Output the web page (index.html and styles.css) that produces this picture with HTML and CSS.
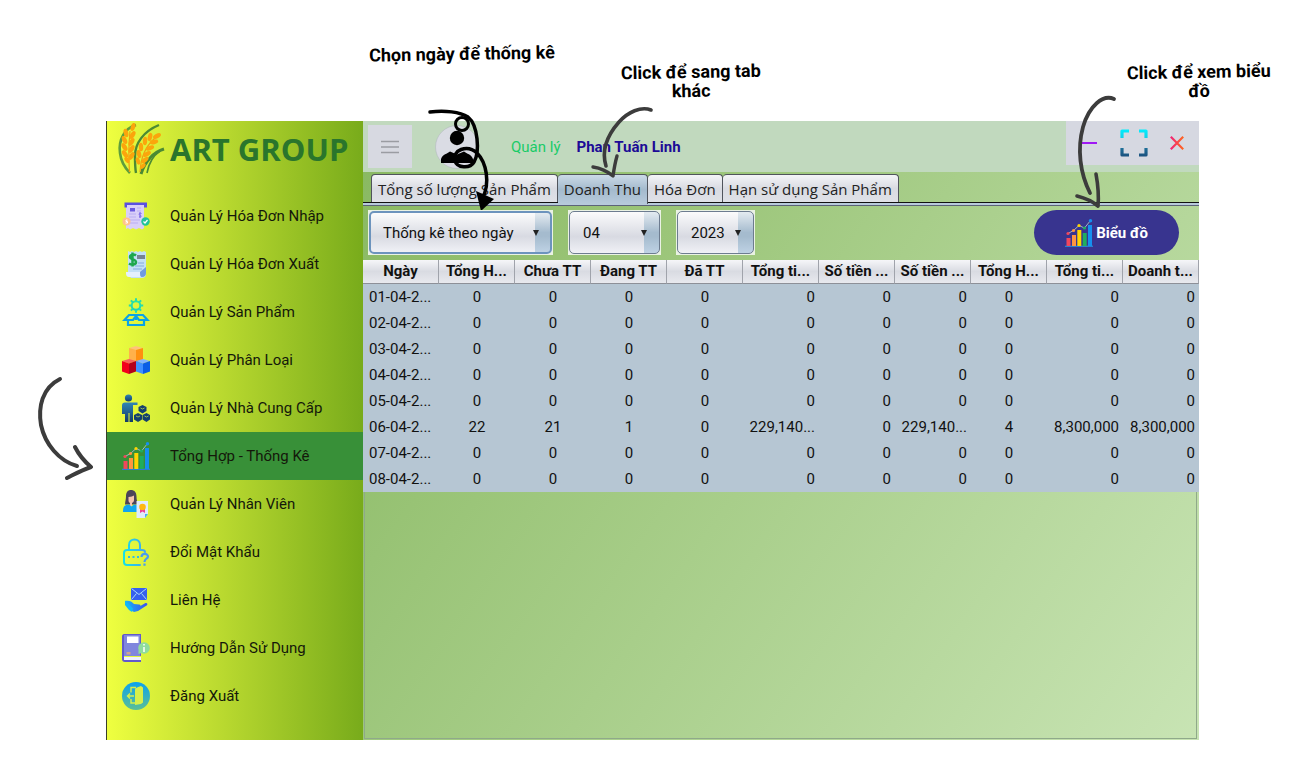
FILE: index.html
```html
<!DOCTYPE html>
<html lang="vi">
<head>
<meta charset="utf-8">
<title>ART GROUP - Tổng Hợp - Thống Kê</title>
<link rel="stylesheet" href="styles.css">
</head>
<body>
<svg class="defs" aria-hidden="true">
  <defs>
    <linearGradient id="g-teal" x1="0" y1="0" x2="0" y2="1"><stop offset="0" stop-color="#2be8a0"/><stop offset="1" stop-color="#1fd0b8"/></linearGradient>
    <linearGradient id="g-navy" x1="0" y1="0" x2="0" y2="1"><stop offset="0" stop-color="#2f86b5"/><stop offset="1" stop-color="#143a66"/></linearGradient>
    <linearGradient id="g-cyan" gradientUnits="userSpaceOnUse" x1="0" y1="0" x2="26" y2="0"><stop offset="0" stop-color="#12e6e6"/><stop offset="1" stop-color="#4a9cf0"/></linearGradient>
    <linearGradient id="g-mail" x1="0" y1="0" x2="1" y2="0"><stop offset="0" stop-color="#18b4f6"/><stop offset="1" stop-color="#3a50ee"/></linearGradient>
    <linearGradient id="g-exit" x1="0" y1="0" x2="0" y2="1"><stop offset="0" stop-color="#0aa2ee"/><stop offset="1" stop-color="#5cbf94"/></linearGradient>
    <linearGradient id="g-max" gradientUnits="userSpaceOnUse" x1="0" y1="0" x2="0" y2="28"><stop offset="0" stop-color="#00f0ff"/><stop offset=".3" stop-color="#12d4ea"/><stop offset=".7" stop-color="#1f6d97"/><stop offset="1" stop-color="#1b4f7c"/></linearGradient>
    <linearGradient id="g-close" gradientUnits="userSpaceOnUse" x1="0" y1="0" x2="14" y2="0"><stop offset="0" stop-color="#f0207c"/><stop offset="1" stop-color="#ff6a1a"/></linearGradient>
    <symbol id="chart" viewBox="0 0 28 28">
      <path d="M0 27.3h28" stroke="#2a7fd0" stroke-width="1.4"/>
      <path d="M1.5 19h4v8h-4z" fill="#f2475c"/><path d="M7 16h4v11H7z" fill="#ff9440"/><path d="M12.3 11h4v16h-4z" fill="#ffd500"/><path d="M17.7 14h4v13h-4z" fill="#1fae5e"/><path d="M23 6h4v21h-4z" fill="#1590f0"/>
      <path d="M3 14.5 8.5 11.500 14 6.500l5.500 2.500L25.500 1.500" fill="none" stroke="#9fb4c4" stroke-width="1"/>
      <circle cx="3" cy="14.500" r="1.600" fill="#f2475c"/><circle cx="8.500" cy="11.500" r="1.600" fill="#ff9440"/><circle cx="14" cy="6.500" r="1.600" fill="#ffd500"/><circle cx="19.500" cy="9" r="1.600" fill="#1fae5e"/><circle cx="25.500" cy="1.800" r="1.700" fill="#1590f0"/>
    </symbol>
  </defs>
</svg>

<main class="page">
  <div class="app">
    <aside class="sidebar">
      <div class="brand">
        <svg class="brand-logo" viewBox="0 0 48 52" aria-hidden="true">
          <g fill="none" stroke="#4c8a34">
            <path d="M19 2C8 5 1 17 3 30c1 9 5 15 10 20" stroke-width="2.600" stroke="#5f9e3c"/>
            <path d="M42 2C27 8 18 20 18 33c0 7 0 12 1 17" stroke-width="2.400"/>
            <path d="M47 26c-10 3-19 12-23 25" stroke-width="3"/>
            <path d="M43 28c-6 4-11 11-13 22" stroke-width="1.600"/>
          </g>
          <g stroke="#f0a010" stroke-width="1.200" fill="none"><path d="M13 8c-1 10-2 20-.5 41M38 15C28 24 24 34 23 49"/></g>
          <g fill="#fba50c">
            <ellipse cx="16" cy="4" rx="2.200" ry="4.200" transform="rotate(18 16 4)"/>
            <ellipse cx="9" cy="10" rx="2.300" ry="4.300" transform="rotate(-14 9 10)"/><ellipse cx="15.500" cy="12" rx="2.300" ry="4.300" transform="rotate(32 15.500 12)"/>
            <ellipse cx="7.500" cy="17" rx="2.300" ry="4.300" transform="rotate(-24 7.500 17)"/><ellipse cx="14.500" cy="19" rx="2.300" ry="4.300" transform="rotate(32 14.500 19)"/>
            <ellipse cx="7.500" cy="24" rx="2.300" ry="4.300" transform="rotate(-30 7.500 24)"/><ellipse cx="14.500" cy="26" rx="2.300" ry="4.300" transform="rotate(32 14.500 26)"/>
            <ellipse cx="8" cy="31" rx="2.300" ry="4.300" transform="rotate(-34 8 31)"/><ellipse cx="14.500" cy="33" rx="2.300" ry="4.300" transform="rotate(32 14.500 33)"/>
            <ellipse cx="10" cy="37" rx="2" ry="3.500" transform="rotate(-36 10 37)"/>
            <ellipse cx="40" cy="13" rx="2.200" ry="4.300" transform="rotate(62 40 13)"/>
            <ellipse cx="33" cy="14" rx="2.200" ry="4.200" transform="rotate(14 33 14)"/><ellipse cx="37" cy="19" rx="2.200" ry="4.300" transform="rotate(76 37 19)"/>
            <ellipse cx="28" cy="18" rx="2.200" ry="4.200" transform="rotate(4 28 18)"/><ellipse cx="33" cy="25" rx="2.200" ry="4.300" transform="rotate(70 33 25)"/>
            <ellipse cx="24" cy="24" rx="2.200" ry="4.200" transform="rotate(-4 24 24)"/><ellipse cx="30" cy="31" rx="2.200" ry="4.300" transform="rotate(60 30 31)"/>
            <ellipse cx="22" cy="31" rx="2.200" ry="4.200" transform="rotate(-14 22 31)"/><ellipse cx="28" cy="37" rx="2.200" ry="4.200" transform="rotate(50 28 37)"/>
            <ellipse cx="21" cy="38" rx="2" ry="3.800" transform="rotate(-20 21 38)"/><ellipse cx="26" cy="43" rx="1.800" ry="3.400" transform="rotate(40 26 43)"/>
          </g>
        </svg>
        <h1 class="brand-name">ART GROUP</h1>
      </div>
      <nav class="menu">
        <a class="menu-item" href="#nhap">
          <svg class="menu-icon" viewBox="0 0 28 28" aria-hidden="true"><path d="M4 3h18v23l-2 1.500-3-1.500-3 1.500-3-1.500-3 1.500-2-1.500-2 1z" fill="#d9cff8"/><path d="M2.500.500h22.500v5H22V3H5v2.500H2.500z" fill="#5a50e0"/><path d="M8 6h5v3.500H8z" fill="#6a5ae0"/><path d="M15 6h4M15 9h4M7 12h7M7 15h7M7 18h11M7 21h9" stroke="#b9aef2" stroke-width="1.200"/><path d="M19.500 11.500c-3-1-3 1.500-1.500 1.700 2 .3 1.500 2.500-1 1.500M18 10v6" stroke="#7a68e8" fill="none"/><circle cx="4.500" cy="19.500" r="4" fill="#ffc28a"/><path d="M5.500 18H4v1.500h1.500V21h-2" stroke="#fff" fill="none"/><circle cx="23.500" cy="19.500" r="4.200" fill="#22c39a"/><path d="m21.500 19.500 1.500 1.500 2.500-3" stroke="#fff" stroke-width="1.200" fill="none"/></svg>
          <span>Quản Lý Hóa Đơn Nhập</span></a>
        <a class="menu-item" href="#xuat">
          <svg class="menu-icon" viewBox="0 0 28 28" aria-hidden="true"><path d="M6 1l2 1 2-1 2 1 2-1 2 1 2-1 2 1 2-1 2 1v22c0 3-2 4-4 4H9l-3-4z" fill="#c3e0f6"/><path d="M4 22h14c0 3 1 5 3 5H7c-3 0-3-3-3-5z" fill="#e4f0fc"/><path d="M20 27c3 0 4-2 4-4v-6l-6 5c0 3 0 5 2 5z" fill="#6f9be0"/><path d="M16 5v4M18 5v4M20 5v4M22 5v4" stroke="#445" stroke-width="1.200"/><path d="M16 13h6M13 16h9M11 19h9" stroke="#9bbce8" stroke-width="1.300"/><path d="M14 5.500c-2-1.500-6-1.200-6 1.500s6 2 6 5-4.500 3.200-7 1.500M10.500 2.500v14" fill="none" stroke="#1da74d" stroke-width="2.500"/></svg>
          <span>Quản Lý Hóa Đơn Xuất</span></a>
        <a class="menu-item" href="#sanpham">
          <svg class="menu-icon" viewBox="0 0 28 28" aria-hidden="true"><g fill="none" stroke="url(#g-teal)"><circle cx="14" cy="7.500" r="4.300" stroke-width="2"/></g><path d="M14 .300v3M14 11.700v3M6.800 7.500h3M18.200 7.500h3M8.900 2.400l2.100 2.100M17 10.500l2.100 2.100M19.100 2.400 17 4.500M8.900 12.600l2.100-2.100" fill="none" stroke="#24dcae" stroke-width="2"/><path d="M7 17h14l4.500 5H17l-3-4-3 4H2.500zM6 22v5h16v-5M14 18v4" fill="none" stroke="#0ba3e6" stroke-width="2.200"/></svg>
          <span>Quản Lý Sản Phẩm</span></a>
        <a class="menu-item" href="#phanloai">
          <svg class="menu-icon" viewBox="0 0 28 28" aria-hidden="true"><path d="m14 0 7 2-7 2-7-2z" fill="#ffc27a"/><path d="M7 2l7 2v13l-7-2z" fill="#ffb04a"/><path d="m14 4 7-2v13l-7 2z" fill="#ff8f0f"/><path d="m7 13 7 2-7 2.500L0 15z" fill="#f8625e"/><path d="M0 15l7 2.500V28l-7-2.500z" fill="#f2001c"/><path d="M7 17.500 14 15v10.500L7 28z" fill="#b4001c"/><path d="m21 13 7 2-7 2.500-7-2.500z" fill="#82b4ff"/><path d="M14 15l7 2.500V28l-7-2.500z" fill="#4090ff"/><path d="m21 17.500 7-2.500v10.500L21 28z" fill="#0a5ee6"/></svg>
          <span>Quản Lý Phân Loại</span></a>
        <a class="menu-item" href="#nhacungcap">
          <svg class="menu-icon" viewBox="0 0 28 28" aria-hidden="true"><g fill="url(#g-navy)"><circle cx="6.500" cy="4" r="3.600"/><path d="M3 8.500h12.500v2.600H11V28H7.500V19h-1v9H3v-8H0v-8.500c0-2 1-3 3-3z"/></g><g fill="#143f6e"><path d="m20.500 11 4 2v4l-4 2.500-4-2.500v-4z"/><path d="m16 19 4 2v4.500L16 28l-4-2.500V21z"/><path d="m24.500 19 3.500 2v4.500L24.500 28 20.500 25.500V21z"/></g><path d="m18.500 14 2 1 2-1M14 22l2 1 2-1M22.500 22l2 1 2-1" fill="none" stroke="#b9d850" stroke-width=".8"/></svg>
          <span>Quản Lý Nhà Cung Cấp</span></a>
        <a class="menu-item menu-item-active" href="#thongke" aria-current="page">
          <svg class="menu-icon" aria-hidden="true"><use href="#chart"/></svg>
          <span>Tổng Hợp - Thống Kê</span></a>
        <a class="menu-item" href="#nhanvien">
          <svg class="menu-icon" viewBox="0 0 28 28" aria-hidden="true"><path d="M3 14.500c0-3 1-5 1-8C4 2 6 0 9 0s5.500 2 5.500 6.500c0 2.500.5 5 1.500 8z" fill="#4d4458"/><path d="M6.500 7c3 0 4-1 5.500-1.500V10c0 1.500-1 2.500-2 3v3H8v-3c-1-.5-1.500-1.500-1.500-3z" fill="#f6c4ae"/><path d="M1 22c0-5 1-7 6-7.500l2.500 2 2.500-2c5 .5 5 3 5 7.500z" fill="#10a5ee"/><path d="M14.500 11h11.500v13l-3 4h-8.500z" fill="#e0ecfb"/><path d="M26 24h-3v4z" fill="#46b0f0"/><path d="M18 18h5v5l-2.500-1.500L18 23z" fill="#ee3f9a"/><circle cx="20.500" cy="17" r="3.300" fill="#ffb80f"/></svg>
          <span>Quản Lý Nhân Viên</span></a>
        <a class="menu-item" href="#matkhau">
          <svg class="menu-icon" viewBox="0 0 28 28" aria-hidden="true"><g fill="none" stroke="url(#g-cyan)" stroke-width="2" stroke-linecap="round"><path d="M7 11V7c0-7.500 11-7.500 11 0v4"/><path d="M18 27H5c-2 0-3-1-3-3V15c0-2 1-3 3-3h15c2 0 3 1 3 2"/></g><path d="M6 18h2v2H6zM10.500 18h2v2h-2zM15 18h2v2h-2z" fill="#30bdec"/><path d="M19.500 19c0-4 6.500-4 6.500-.5 0 2.500-3.500 2-3.500 5.500M22.500 25.500v2.200" fill="none" stroke="#4a9cf0" stroke-width="2.200"/></svg>
          <span>Đổi Mật Khẩu</span></a>
        <a class="menu-item" href="#lienhe">
          <svg class="menu-icon" viewBox="0 0 28 28" aria-hidden="true"><path d="M9 2h16v12H9z" fill="#3560ee"/><path d="m9.500 2.500 7.500 6 7.500-6M9.500 13.500l5-6M24.500 13.500l-5-6" stroke="#a8d8f8" fill="none"/><path d="M3 15c3-1 7 0 9 3l5 .5c2 0 2 2 0 2.200h-4 4l6-3.500c2-1 3 1 2 2L16 25l-4 1-5-3-4-5z" fill="url(#g-mail)"/><path d="M3 14.500l8 8-1 3.500-3-2-4-5z" fill="#10b8f8"/></svg>
          <span>Liên Hệ</span></a>
        <a class="menu-item" href="#huongdan">
          <svg class="menu-icon" viewBox="0 0 28 28" aria-hidden="true"><path d="M2 0h17v22H2v2h17v4H3c-2 0-3-1-3-3V2C0 1 1 0 2 0z" fill="#6259cc"/><path d="M2 23h17v3H2z" fill="#eef0ff"/><path d="M2 1h16v21H2z" fill="#8086dd"/><path d="M5 2.500h11.500V9H5z" fill="#fff"/><path d="M4.500 18h4v2.500h-4z" fill="#d0a58e"/><circle cx="22" cy="14" r="5.800" fill="#8fdc9c"/><path d="M16.500 16v4l4.500-1.500z" fill="#8fdc9c"/><path d="M22 13v5M22 10v1.500" stroke="#fff" stroke-width="1.500"/></svg>
          <span>Hướng Dẫn Sử Dụng</span></a>
        <a class="menu-item" href="#dangxuat">
          <svg class="menu-icon" viewBox="0 0 28 28" aria-hidden="true"><circle cx="14" cy="14" r="14" fill="url(#g-exit)"/><path d="M13 7.500c0-1 1-1.500 2-2l4-1.500 2 1.500v15L19 22l-6 1z" fill="#d6f04a"/><path d="M14 5.500H9v5M9 17v4h4M12 14H5.500M8 11.500 5.500 14 8 16.500" fill="none" stroke="#d6f04a" stroke-width="1.400"/></svg>
          <span>Đăng Xuất</span></a>
      </nav>
    </aside>

    <section class="content">
      <header class="topbar">
        <button class="menu-toggle" type="button" aria-label="Menu"><svg width="18" height="14" viewBox="0 0 18 14" aria-hidden="true"><path d="M0 1.500h18M0 7h18M0 12.500h18" stroke="#9a9ca2" stroke-width="1.500"/></svg></button>
        <svg class="avatar" viewBox="0 0 44 44" aria-hidden="true"><circle cx="22" cy="22" r="21.500" fill="#dadce4" stroke="#b4bac0" stroke-width=".6"/><circle cx="22" cy="13" r="7.200"/><path d="M6 38v-4c2-5 6-5 9-7.500l7 3 7-3c3 2.500 7 2.500 9 7.500v4z"/></svg>
        <span class="role">Quản lý</span>
        <strong class="user">Phan Tuấn Linh</strong>
        <div class="window-buttons">
          <button type="button" aria-label="Thu nhỏ"><svg width="16" height="4" viewBox="0 0 16 4" aria-hidden="true"><path d="M0 2h16" stroke="#a018f4" stroke-width="2"/></svg></button>
          <button type="button" aria-label="Phóng to"><svg width="28" height="28" viewBox="0 0 28 28" aria-hidden="true"><path d="M2 9V2h7M19 2h7v7M26 19v7h-7M9 26H2v-7" fill="none" stroke="url(#g-max)" stroke-width="3.200" stroke-linejoin="round"/></svg></button>
          <button type="button" aria-label="Đóng"><svg width="14" height="14" viewBox="0 0 14 14" aria-hidden="true"><path d="m.8.8 12.400 12.400M13.200.8.8 13.200" stroke="url(#g-close)" stroke-width="2.200"/></svg></button>
        </div>
      </header>

      <div class="tabs" role="tablist">
        <button class="tab" type="button" role="tab">Tổng số lượng Sản Phẩm</button>
        <button class="tab tab-active" type="button" role="tab" aria-selected="true">Doanh Thu</button>
        <button class="tab" type="button" role="tab">Hóa Đơn</button>
        <button class="tab" type="button" role="tab">Hạn sử dụng Sản Phẩm</button>
      </div>

      <div class="filters">
        <span class="combo combo-mode"><select aria-label="Kiểu thống kê"><option>Thống kê theo ngày</option></select></span>
        <span class="combo combo-month"><select aria-label="Tháng"><option>04</option></select></span>
        <span class="combo combo-year"><select aria-label="Năm"><option>2023</option></select></span>
        <button class="chart-button" type="button"><svg width="28" height="28" aria-hidden="true"><use href="#chart"/></svg>Biểu đồ</button>
      </div>

      <table class="report">
        <thead><tr><th>Ngày</th><th>Tổng H...</th><th>Chưa TT</th><th>Đang TT</th><th>Đã TT</th><th>Tổng ti...</th><th>Số tiền ...</th><th>Số tiền ...</th><th>Tổng H...</th><th>Tổng ti...</th><th>Doanh t...</th></tr></thead>
        <tbody>
          <tr><td>01-04-2...</td><td>0</td><td>0</td><td>0</td><td>0</td><td class="money">0</td><td class="money">0</td><td class="money">0</td><td>0</td><td class="money">0</td><td class="money">0</td></tr>
          <tr><td>02-04-2...</td><td>0</td><td>0</td><td>0</td><td>0</td><td class="money">0</td><td class="money">0</td><td class="money">0</td><td>0</td><td class="money">0</td><td class="money">0</td></tr>
          <tr><td>03-04-2...</td><td>0</td><td>0</td><td>0</td><td>0</td><td class="money">0</td><td class="money">0</td><td class="money">0</td><td>0</td><td class="money">0</td><td class="money">0</td></tr>
          <tr><td>04-04-2...</td><td>0</td><td>0</td><td>0</td><td>0</td><td class="money">0</td><td class="money">0</td><td class="money">0</td><td>0</td><td class="money">0</td><td class="money">0</td></tr>
          <tr><td>05-04-2...</td><td>0</td><td>0</td><td>0</td><td>0</td><td class="money">0</td><td class="money">0</td><td class="money">0</td><td>0</td><td class="money">0</td><td class="money">0</td></tr>
          <tr><td>06-04-2...</td><td>22</td><td>21</td><td>1</td><td>0</td><td class="money">229,140...</td><td class="money">0</td><td class="money">229,140...</td><td>4</td><td class="money">8,300,000</td><td class="money">8,300,000</td></tr>
          <tr><td>07-04-2...</td><td>0</td><td>0</td><td>0</td><td>0</td><td class="money">0</td><td class="money">0</td><td class="money">0</td><td>0</td><td class="money">0</td><td class="money">0</td></tr>
          <tr><td>08-04-2...</td><td>0</td><td>0</td><td>0</td><td>0</td><td class="money">0</td><td class="money">0</td><td class="money">0</td><td>0</td><td class="money">0</td><td class="money">0</td></tr>
        </tbody>
      </table>
      <div class="empty-area"></div>
    </section>
  </div>

  <p class="note note-date">Chọn ngày để thống kê</p>
  <p class="note note-tab">Click để sang tab khác</p>
  <p class="note note-chart">Click để xem biểu đồ</p>

  <svg class="arrow arrow-date" width="80" height="110" viewBox="0 0 80 110" aria-hidden="true">
    <g fill="none" stroke="#000" stroke-linecap="round"><path d="M6 12c15-2 30 0 38 5 10 8 12 35 6 45-4 7-17 6-19-1-3-11 12-17 22-8 9 9 14 30 5 46" stroke-width="3.500"/><circle cx="38" cy="24" r="6.500" stroke-width="3"/></g><path d="m52 91 18 8-13 12z"/>
  </svg>
  <svg class="arrow arrow-tab" width="70" height="80" viewBox="0 0 70 80" aria-hidden="true"><path d="M61 10C51 6 38 12 29 22 14 39 12 53 16 66" stroke-width="3.600"/><path d="M3 67c7 1 14 4 20 9 1-7 2-13 4-20" stroke-width="3.400"/></svg>
  <svg class="arrow arrow-chart" width="50" height="120" viewBox="0 0 50 120" aria-hidden="true"><path d="M44 9C33 4 19 16 13 37c-6 22-3 46 7 66" stroke-width="3.800"/><path d="M7 106c8 2 15 5 21 10 1-11 0-21-2-32" stroke-width="3.600"/></svg>
  <svg class="arrow arrow-menu" width="60" height="106" viewBox="0 0 60 106" aria-hidden="true"><path d="M25 5C7 14 3 33 6 51c4 19 18 36 36 41" stroke-width="4"/><path d="M40 73c4 8 9 14 16 20-9 3-16 7-24 11" stroke-width="4"/></svg>
</main>
</body>
</html>
```
FILE: styles.css
```css
* { box-sizing: border-box; }

body {
  margin: 0;
  background: #fff;
  color: #111;
  font-family: Roboto, "Noto Sans", sans-serif;
  font-size: 15px;
}

button, select { font: inherit; color: inherit; }

.defs { position: absolute; width: 0; height: 0; }

.page {
  position: relative;
  display: flex;
  min-height: 100vh;
  padding: 121px 101px 20px 106px;
}

.app { display: flex; flex: 1; min-width: 0; }

/* Sidebar */
.sidebar {
  flex: none;
  width: 257px;
  border-left: 1px solid #3a3f2a;
  background: linear-gradient(90deg, #efff40, #78ab1b);
}

.brand { display: flex; align-items: center; gap: 5px; height: 70px; padding: 0 8px 14px 10px; }
.brand-logo { flex: none; width: 48px; height: 52px; }
.brand-name {
  margin: 0;
  color: #2a752c;
  font: 700 31px/40px "Open Sans", "Noto Sans", sans-serif;
  white-space: nowrap;
}

.menu-item {
  display: flex;
  align-items: center;
  gap: 20px;
  height: 48px;
  padding-left: 15px;
  color: #14180a;
  text-decoration: none;
  white-space: nowrap;
}
.menu { padding-top: 1px; }
.menu-item-active { background: #389038; }
.menu-icon { flex: none; width: 28px; height: 28px; }

/* Content */
.content {
  display: flex;
  flex: 1;
  flex-direction: column;
  min-width: 0;
  background: linear-gradient(125deg, #88b860, #c8e4b4);
}

.topbar {
  display: flex;
  align-items: center;
  height: 51px;
  padding-left: 5px;
  background: #c1d9be;
}
.menu-toggle {
  display: grid;
  place-items: center;
  width: 44px;
  height: 43px;
  padding: 0;
  border: 0;
  background: #d7d9e1;
}
.avatar { width: 44px; height: 44px; margin: 0 32px 0 23px; }
.role { color: #19cb68; }
.user { margin-left: 16px; color: #1c0a96; }

.window-buttons {
  display: flex;
  align-self: flex-start;
  justify-content: space-between;
  width: 133px;
  height: 44px;
  margin-left: auto;
  padding: 0 15px;
  background: #d6d8e1;
}
.window-buttons button { display: flex; align-items: center; padding: 0; border: 0; background: none; }

.tabs {
  display: flex;
  align-items: flex-end;
  height: 34px;
  padding: 0 8px;
  border-bottom: 1px solid #5c6378;
  box-shadow: inset 0 -2px #b7cadb, inset 0 -3px #111;
}
.tab {
  height: 28px;
  margin-bottom: 3px;
  padding: 0 6px;
  border: 1px solid #50545c;
  border-bottom: 0;
  border-radius: 4px 4px 0 0;
  background: linear-gradient(#f4f5f8, #d9dbe2 50%, #dfe1e7);
  color: #222;
  font-family: "Open Sans", "Noto Sans", sans-serif;
  font-size: 15px;
  line-height: 26px;
  white-space: nowrap;
}
.tab + .tab { border-left: 0; }
.tab-active { margin-bottom: 1px; padding-bottom: 2px; height: 30px; background: linear-gradient(#cbdae7, #a4bacd 50%, #b7cadb); }

.filters { display: flex; align-items: center; gap: 15px; padding: 4px 20px 5px 5px; }

.combo { position: relative; padding: 1px; background: #eaf2e4; }
.combo::after {
  content: "";
  position: absolute;
  top: 20px;
  right: 14px;
  border: 3px solid transparent;
  border-top: 6px solid #222;
  border-bottom: 0;
  pointer-events: none;
}
.combo select {
  display: block;
  width: 100%;
  height: 43px;
  padding: 0 18px 0 13px;
  appearance: none;
  border: 1px solid #6d7c90;
  border-radius: 5px;
  background:
    linear-gradient(#e4ebf1, #a5bbce 50%, #a5bbce 60%, #bed2e4) right / 15px 100% no-repeat,
    linear-gradient(#fbfbfc, #d8dae2 60%, #f0f1f6);
}
.combo-mode { width: 185px; }
.combo-mode select { border: 2px solid #6c93bd; padding-left: 12px; }
.combo-month { width: 93px; }
.combo-year { width: 79px; }

.chart-button {
  display: flex;
  align-items: center;
  justify-content: center;
  gap: 3px;
  width: 145px;
  height: 45px;
  margin-left: auto;
  padding: 0;
  border: 0;
  border-radius: 23px;
  background: #38348f;
  color: #fff;
  font-weight: 700;
}

/* Report table */
.report { width: 100%; table-layout: fixed; border-spacing: 0; line-height: 26px; }
.report th {
  padding: 0;
  border-right: 1px solid #a0a3ab;
  border-bottom: 1px solid #8d9098;
  background: linear-gradient(#f6f6f9, #d9dbe2 50%, #e8e9ee);
  color: #111;
  font-weight: 700;
  line-height: 23px;
  white-space: nowrap;
}
.report td { padding: 0 4px; background: #b6c6d3; text-align: center; white-space: nowrap; }
.report td:first-child { padding-left: 6px; text-align: left; }
.report td.money { text-align: right; }

.empty-area { flex: 1; margin: 0 2px 1px 1px; border: 1px solid #8fa98a; border-top: 0; }

/* Callouts laid over the window */
.note {
  position: absolute;
  margin: 0;
  color: #000;
  font-size: 18px;
  font-weight: 700;
  line-height: 19px;
  text-align: center;
  transform: rotate(-1deg);
}
.note-date { left: 362px; top: 44px; width: 200px; }
.note-tab { left: 616px; top: 62px; width: 150px; }
.note-chart { right: 26px; top: 62px; width: 150px; }

.arrow { position: absolute; pointer-events: none; fill: none; stroke: #3c3c3c; stroke-linecap: round; stroke-linejoin: round; }
.arrow-date { left: 424px; top: 100px; fill: #000; stroke: none; }
.arrow-tab { left: 590px; top: 100px; }
.arrow-chart { right: 180px; top: 90px; }
.arrow-menu { left: 35px; top: 374px; }
```
